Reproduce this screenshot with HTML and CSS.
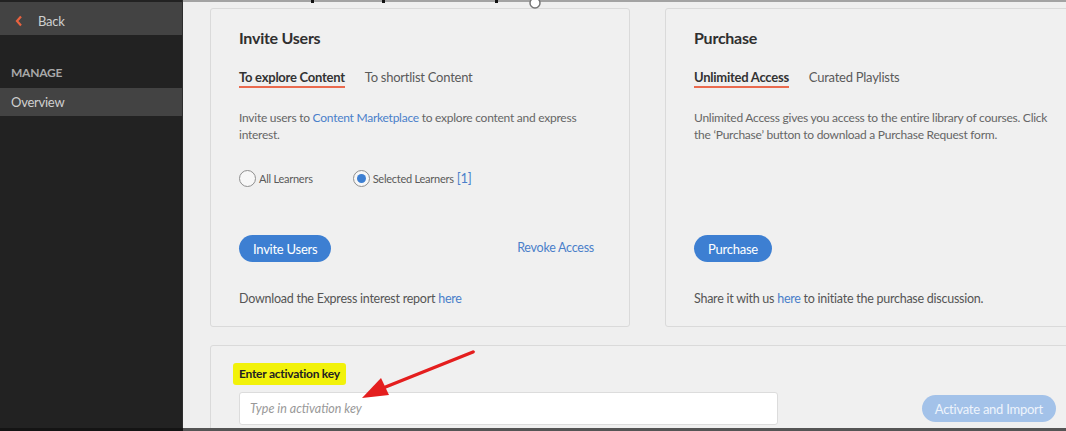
FILE: index.html
```html
<!DOCTYPE html>
<html>

<head>
  <title>Content Marketplace - Overview</title>
  <link rel="stylesheet" href="styles.css">
</head>

<body>
  <div class="screen">
    <div class="sidebar">
      <div class="back-row">
        <svg class="back-arrow" width="8" height="12" viewBox="0 0 8 12">
          <polyline points="6,1.5 2,6 6,10.5" fill="none" stroke="#e8623f" stroke-width="2.2" />
        </svg>
        Back
      </div>
      <div class="side-label">MANAGE</div>
      <div class="side-item">Overview</div>
    </div>

    <div class="main">
      <svg class="top-edge" width="883" height="12" viewBox="0 0 883 12">
        <line x1="0" y1="1" x2="883" y2="1" stroke="#8a8a8a" stroke-width="1.5" />
        <rect x="128" y="0" width="3" height="3" fill="#111" />
        <rect x="199" y="0" width="3" height="3" fill="#111" />
        <rect x="312" y="0" width="3" height="3" fill="#111" />
        <circle cx="352" cy="3" r="5" fill="#fff" stroke="#777" stroke-width="1.5" />
      </svg>

      <div class="card-row">
        <div class="card">
          <h2 class="card-title">Invite Users</h2>
          <div class="tabs">
            <span class="tab active">To explore Content</span>
            <span class="tab">To shortlist Content</span>
          </div>
          <p class="desc">Invite users to <a class="link">Content Marketplace</a> to explore content and express interest.</p>

          <div class="radios">
            <label class="radio"><span class="radio-dot"></span>All Learners</label>
            <label class="radio"><span class="radio-dot checked"></span>Selected Learners <span class="count">[1]</span></label>
          </div>

          <div class="actions">
            <button class="btn">Invite Users</button>
            <a class="link revoke">Revoke Access</a>
          </div>
          <p class="note">Download the Express interest report <a class="link">here</a></p>
        </div>

        <div class="card">
          <h2 class="card-title">Purchase</h2>
          <div class="tabs">
            <span class="tab active">Unlimited Access</span>
            <span class="tab">Curated Playlists</span>
          </div>
          <p class="desc">Unlimited Access gives you access to the entire library of courses. Click the &lsquo;Purchase&rsquo; button to download a Purchase Request form.</p>

          <div class="spacer"></div>

          <div class="actions">
            <button class="btn">Purchase</button>
          </div>
          <p class="note">Share it with us <a class="link">here</a> to initiate the purchase discussion.</p>
        </div>
      </div>

      <div class="key-card">
        <div class="key-label"><span class="marker">Enter activation key</span></div>
        <div class="key-row">
          <input class="key-input" type="text" placeholder="Type in activation key">
          <button class="btn btn-disabled">Activate and Import</button>
        </div>
        <!-- annotation arrow -->
        <svg class="arrow" width="130" height="60" viewBox="0 0 130 60">
          <line x1="120" y1="6" x2="30" y2="42" stroke="#e41e1e" stroke-width="3.5" stroke-linecap="round" />
          <polygon points="9,52 28,32 36,49" fill="#e41e1e" />
        </svg>
      </div>
    </div>
  </div>
  <div class="bottom-bar">
    <div class="bottom-side"></div>
    <div class="bottom-main"></div>
  </div>
</body>

</html>
```

FILE: styles.css
```css
body {
  margin: 0;
  padding: 0;
  font-family: Lato, "Open Sans", Arial, sans-serif;
  letter-spacing: -0.25px;
  background-color: #efefef;
  overflow: hidden;
  height: 431px;
}

.screen {
  display: flex;
  height: 428px;
}

/* sidebar */
.sidebar {
  width: 182px;
  flex-shrink: 0;
  background-color: #222;
  border-right: 1px solid #2e2e2e;
  padding-top: 2px;
}

.back-row {
  height: 33px;
  box-sizing: border-box;
  padding-top: 4px;
  background-color: #434343;
  color: #cfcfcf;
  font-size: 13px;
  display: flex;
  align-items: center;
  padding-left: 15px;
}

.back-arrow {
  margin-right: 15px;
}

.side-label {
  margin-top: 31px;
  padding-left: 11px;
  font-size: 12px;
  font-weight: bold;
  color: #a8a8a8;
  height: 14px;
  line-height: 14px;
}

.side-item {
  margin-top: 8px;
  height: 28px;
  line-height: 28px;
  padding-left: 11px;
  background-color: #434343;
  color: #d0d0d0;
  font-size: 13px;
}

/* main */
.main {
  flex: 1;
  position: relative;
  padding: 8px 0 0 27px;
  overflow: hidden;
}

.top-edge {
  position: absolute;
  left: 0;
  top: 0;
}

.card-row {
  display: flex;
  gap: 35px;
}

.card {
  width: 420px;
  flex-shrink: 0;
  height: 319px;
  box-sizing: border-box;
  border: 1px solid #dadada;
  border-radius: 3px;
  background-color: #f0f0f0;
  padding: 19px 28px 0 28px;
  display: flex;
  flex-direction: column;
}

.card-title {
  margin: 0;
  font-size: 16px;
  line-height: 20px;
  font-weight: bold;
  color: #2f2f2f;
}

.tabs {
  margin-top: 20px;
  display: flex;
  gap: 20px;
  font-size: 13px;
  line-height: 18px;
}

.tab {
  color: #5a5a5a;
  padding-bottom: 0;
  border-bottom: 2px solid transparent;
}

.tab.active {
  color: #333;
  font-weight: bold;
  border-bottom-color: #ea6a4e;
}

.desc {
  margin: 21px 0 0;
  font-size: 12px;
  line-height: 17px;
  color: #666;
}

.link {
  color: #4a7fca;
  cursor: pointer;
}

.radios {
  margin-top: 26px;
  display: flex;
  gap: 40px;
  height: 18px;
  align-items: center;
}

.radio {
  display: flex;
  align-items: center;
  font-size: 11px;
  color: #5a5a5a;
}

.radio-dot {
  width: 15px;
  height: 15px;
  border: 1px solid #8f8f8f;
  border-radius: 50%;
  background-color: #f7f7f7;
  margin-right: 3px;
  position: relative;
}

.radio-dot.checked::after {
  content: "";
  position: absolute;
  left: 3px;
  top: 3px;
  width: 9px;
  height: 9px;
  border-radius: 50%;
  background-color: #3d7fd2;
}

.count {
  color: #4a7fca;
  font-size: 13px;
  margin-left: 3px;
}

.spacer {
  height: 44px;
}

.actions {
  margin-top: 48px;
  display: flex;
  align-items: center;
  justify-content: space-between;
  padding-right: 7px;
}

.btn {
  height: 27px;
  padding: 0 14px;
  border: none;
  border-radius: 14px;
  background-color: #3d7fd2;
  color: #fff;
  font-family: inherit;
  letter-spacing: -0.25px;
  font-size: 13px;
  cursor: pointer;
}

.revoke {
  font-size: 12.5px;
  position: relative;
  top: -1px;
}

.note {
  margin: 28px 0 0;
  font-size: 12.5px;
  line-height: 17px;
  color: #555;
}

/* activation key */
.key-card {
  position: relative;
  margin-top: 18px;
  width: 875px;
  height: 100px;
  box-sizing: border-box;
  border: 1px solid #dadada;
  border-radius: 3px;
  background-color: #f0f0f0;
  padding: 16px 28px 0 28px;
}

.key-label {
  height: 22px;
}

.marker {
  display: inline-block;
  margin-left: -6px;
  padding: 0 6px;
  height: 22px;
  line-height: 22px;
  background-color: #f2f20a;
  border-radius: 3px;
  font-size: 12px;
  font-weight: bold;
  color: #222;
}

.key-row {
  margin-top: 8px;
  display: flex;
  align-items: center;
  justify-content: space-between;
}

.key-input {
  width: 539px;
  height: 33px;
  box-sizing: border-box;
  border: 1px solid #dcdcdc;
  border-radius: 3px;
  background-color: #fff;
  padding: 0 10px;
  font-family: inherit;
  font-size: 12.5px;
}

.key-input::placeholder {
  color: #999;
  font-style: italic;
}

.btn-disabled {
  background-color: #a3c2e9;
  color: #eef4fc;
  padding: 0 13px;
  cursor: default;
}

.arrow {
  position: absolute;
  left: 142px;
  top: 0;
}

.bottom-bar {
  display: flex;
  height: 3px;
}

.bottom-side {
  width: 183px;
  background-color: #141414;
}

.bottom-main {
  flex: 1;
  background-color: #555;
}
```
